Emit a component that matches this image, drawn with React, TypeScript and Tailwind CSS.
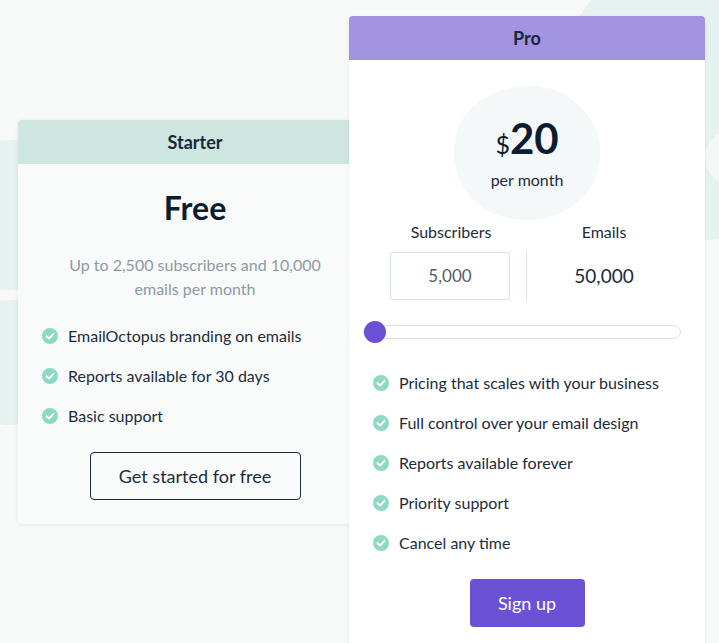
import React from "react";

function Check() {
  return (
    <svg width="16" height="16" viewBox="0 0 16 16" className="shrink-0 mt-[4px]">
      <circle cx="8" cy="8" r="8" fill="#8dd9c5" />
      <path d="M4.6 8.2 L7 10.5 L11.4 5.9" fill="none" stroke="#ffffff" strokeWidth="2" strokeLinecap="round" strokeLinejoin="round" />
    </svg>
  );
}

function Feature({ text }: { text: string }) {
  return (
    <li className="flex items-start gap-[10px] h-[40px]">
      <Check />
      <span className="text-[16px] leading-[24px] text-[#1c2b3a]">{text}</span>
    </li>
  );
}

export default function App() {
  return (
    <div
      className="relative w-[719px] h-[643px] overflow-hidden bg-[#f7f9f9]"
      style={{ fontFamily: "Lato, 'Open Sans', sans-serif" }}
    >
      {/* decorative background blobs */}
      <div className="absolute left-[-60px] top-[140px] w-[140px] h-[150px] rounded-[50%] bg-[#e5f2ef]" />
      <div className="absolute left-[-50px] top-[300px] w-[120px] h-[125px] rounded-[50%] bg-[#e5f2ef]" />
      <div className="absolute left-[560px] top-[-40px] w-[260px] h-[280px] rounded-[45%] bg-[#e5f2ef]" />
      <div className="absolute left-[705px] top-[130px] w-[60px] h-[55px] rounded-full bg-[#f3f8f7]" />

      <div className="relative flex items-start">
        {/* Starter */}
        <div className="ml-[18px] mt-[120px] w-[354px] rounded-[4px] bg-[#f9fbfb] shadow-[0_1px_4px_rgba(0,0,0,0.08)] overflow-hidden">
          <div className="h-[44px] bg-[#cee6e0] flex items-center justify-center text-[18px] font-bold text-[#16283a]">
            Starter
          </div>
          <div className="flex flex-col items-center pb-[24px]">
            <div className="mt-[24px] text-[32px] leading-[40px] font-bold text-[#0c1d31]">Free</div>
            <p className="mt-[25px] w-[280px] text-center text-[16px] leading-[24px] text-[#8e99a3]">
              Up to 2,500 subscribers and 10,000 emails per month
            </p>
            <ul className="mt-[23px] self-stretch pl-[24px]">
              <Feature text="EmailOctopus branding on emails" />
              <Feature text="Reports available for 30 days" />
              <Feature text="Basic support" />
            </ul>
            <button className="mt-[8px] w-[211px] h-[48px] rounded-[4px] border border-[#1c2b3a] text-[18px] text-[#1c2b3a] bg-transparent">
              Get started for free
            </button>
          </div>
        </div>

        {/* Pro */}
        <div className="relative z-10 ml-[-23px] mt-[16px] w-[356px] h-[640px] rounded-t-[4px] bg-white shadow-[0_1px_4px_rgba(0,0,0,0.06)] overflow-hidden">
          <div className="h-[44px] bg-[#a294e1] flex items-center justify-center text-[18px] font-bold text-[#16283a]">
            Pro
          </div>
          <div className="flex flex-col items-center">
            <div className="relative mt-[24px] w-[146px] h-[136px] flex flex-col items-center">
              <svg className="absolute inset-0" width="146" height="136" viewBox="0 0 146 136">
                <path
                  d="M70 2 C110 -2 146 30 146 68 C146 110 112 136 72 136 C30 136 0 108 0 66 C0 30 30 6 70 2 Z"
                  fill="#f5f8f8"
                />
              </svg>
              <div className="relative mt-[34px] flex items-baseline text-[#0c1d31]">
                <span className="text-[25px] leading-[40px]">$</span>
                <span className="text-[42px] leading-[40px] font-bold">20</span>
              </div>
              <div className="relative mt-[5px] text-[16px] leading-[22px] text-[#1c2b3a]">per month</div>
            </div>

            <div className="mt-[0px] w-full flex">
              <div className="flex-1 flex flex-col items-end">
                <div className="w-[120px] text-center text-[16px] leading-[24px] text-[#1c2b3a] mr-[16px]">Subscribers</div>
              </div>
              <div className="flex-1 flex flex-col items-start">
                <div className="w-[120px] text-center text-[16px] leading-[24px] text-[#1c2b3a] ml-[17px]">Emails</div>
              </div>
            </div>

            <div className="mt-[8px] w-full flex">
              <div className="flex-1 flex justify-end pr-[16px] border-r border-[#dde5e4]">
                <div className="w-[120px] h-[48px] rounded-[3px] border border-[#d6e0df] flex items-center justify-center text-[17px] text-[#555d66]">
                  5,000
                </div>
              </div>
              <div className="flex-1 flex items-center pl-[17px]">
                <div className="w-[120px] text-center text-[19px] text-[#1c2b3a]">50,000</div>
              </div>
            </div>

            <div className="relative mt-[25px] self-start ml-[14px] w-[318px] h-[14px] rounded-full border border-[#d8e4e2] bg-white">
              <div className="absolute left-[0px] top-[-5px] w-[22px] h-[22px] rounded-full bg-[#6b50d3]" />
            </div>

            <ul className="mt-[32px] self-stretch pl-[24px]">
              <Feature text="Pricing that scales with your business" />
              <Feature text="Full control over your email design" />
              <Feature text="Reports available forever" />
              <Feature text="Priority support" />
              <Feature text="Cancel any time" />
            </ul>

            <button className="mt-[8px] w-[115px] h-[48px] rounded-[4px] bg-[#6b52d4] text-white text-[18px]">
              Sign up
            </button>
          </div>
        </div>
      </div>
    </div>
  );
}
